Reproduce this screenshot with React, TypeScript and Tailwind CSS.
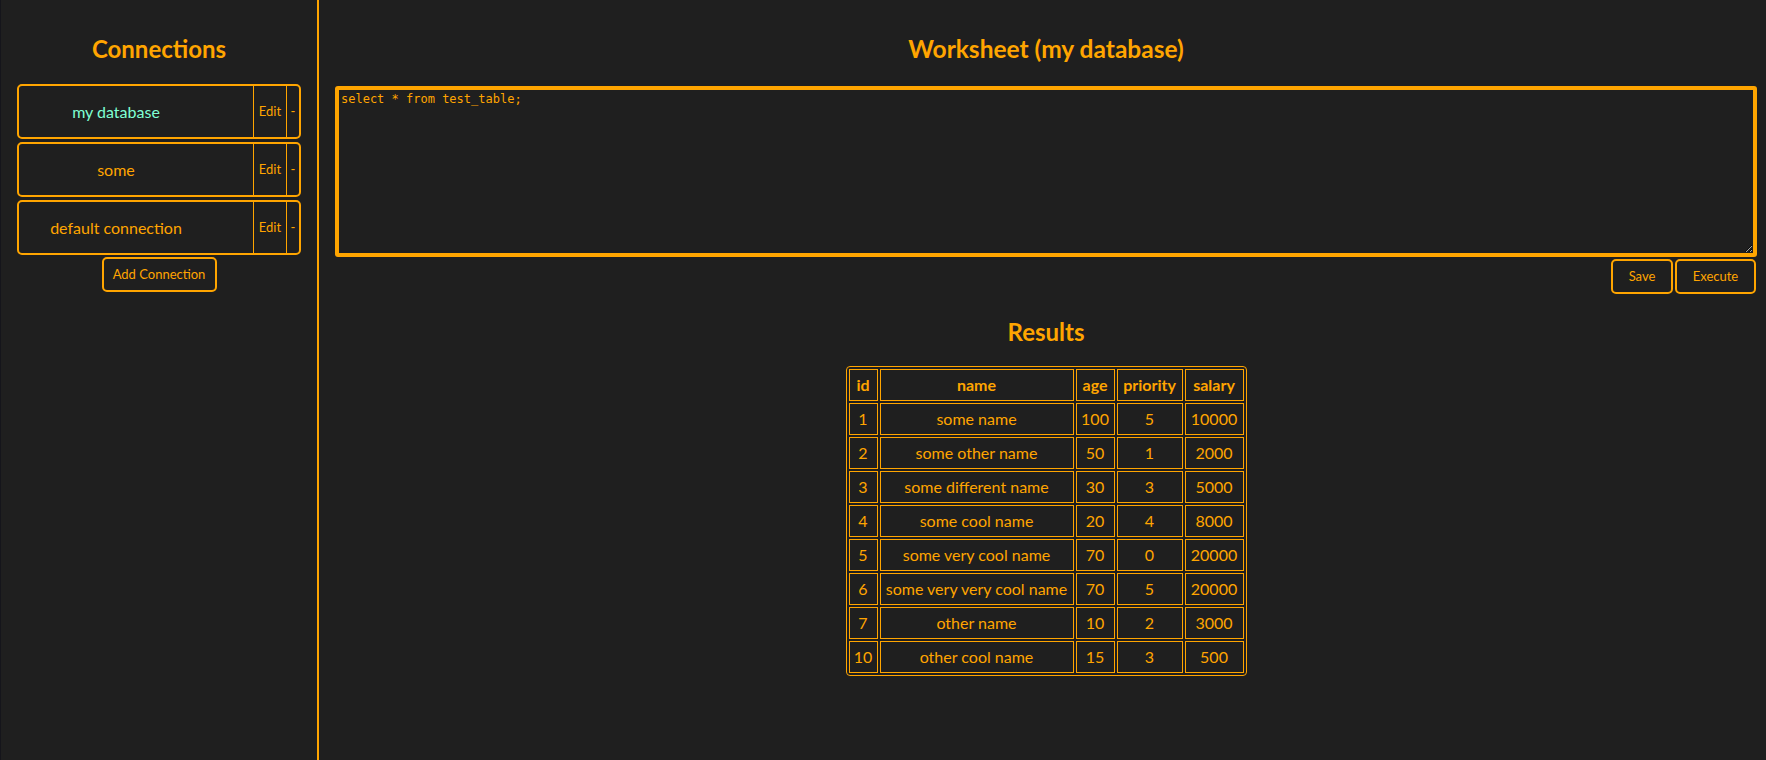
import { useState } from 'react';

type Connection = { id: number; name: string };

const connections: Connection[] = [
  { id: 1, name: 'my database' },
  { id: 2, name: 'some' },
  { id: 3, name: 'default connection' },
];

const columns = ['id', 'name', 'age', 'priority', 'salary'];
const colWidths = ['w-[29px]', 'w-[194px]', 'w-[39px]', 'w-[66px]', 'w-[59px]'];

const rows = [
  [1, 'some name', 100, 5, 10000],
  [2, 'some other name', 50, 1, 2000],
  [3, 'some different name', 30, 3, 5000],
  [4, 'some cool name', 20, 4, 8000],
  [5, 'some very cool name', 70, 0, 20000],
  [6, 'some very very cool name', 70, 5, 20000],
  [7, 'other name', 10, 2, 3000],
  [10, 'other cool name', 15, 3, 500],
];

export default function App() {
  const [selected, setSelected] = useState(1);
  const [query, setQuery] = useState('select * from test_table;');

  return (
    <div className="flex h-screen w-full bg-[#1f1f1f] text-[#ffa500] font-['Lato',sans-serif]">
      <aside className="w-[319px] shrink-0 border-l border-l-[#15151b] border-r-2 border-r-[#ffa500] pt-[35px]">
        <h2 className="text-center text-[24px] leading-[28px] font-bold">Connections</h2>
        <div className="mt-[21px] ml-[16px] flex w-[284px] flex-col gap-[3px]">
          {connections.map((c) => (
            <div key={c.id} className="flex h-[55px] rounded-[5px] border-2 border-[#ffa500]">
              <button
                onClick={() => setSelected(c.id)}
                className={`w-[194px] text-center text-[16px] ${selected === c.id ? 'text-[#7fffd4]' : 'text-[#ffa500]'}`}
              >
                {c.name}
              </button>
              <div className="flex-1" />
              <button className="w-[33px] border-l border-[#ffa500] text-[13px]">Edit</button>
              <button className="w-[13px] border-l border-[#ffa500] text-[13px]">-</button>
            </div>
          ))}
        </div>
        <div className="mt-[2px] flex justify-center">
          <button className="h-[35px] w-[115px] rounded-[5px] border-2 border-[#ffa500] text-[13px]">
            Add Connection
          </button>
        </div>
      </aside>

      <main className="flex-1 pl-[16px] pr-[9px] pt-[35px]">
        <h2 className="text-center text-[24.5px] leading-[28px] font-bold">Worksheet (my database)</h2>
        <textarea
          value={query}
          onChange={(e) => setQuery(e.target.value)}
          spellCheck={false}
          className="mt-[23px] block h-[171px] w-full rounded-[3px] border-4 border-[#ffa500] bg-transparent p-[2px] font-['DejaVu_Sans_Mono',monospace] text-[12px] leading-[15px] text-[#ffa500] outline-none"
        />
        <div className="mt-[2px] flex justify-end gap-[2px] pr-[1px]">
          <button className="h-[35px] w-[62px] rounded-[5px] border-2 border-[#ffa500] text-[13px]">Save</button>
          <button className="h-[35px] w-[81px] rounded-[5px] border-2 border-[#ffa500] text-[13px]">Execute</button>
        </div>

        <h2 className="mt-[24px] text-center text-[24px] leading-[28px] font-bold">Results</h2>
        <table className="mx-auto mt-[20px] border-separate border-spacing-[2px] rounded-[4px] border border-[#ffa500] text-[16px]">
          <thead>
            <tr>
              {columns.map((col, i) => (
                <th
                  key={col}
                  className={`${colWidths[i]} border border-[#ffa500] px-[1px] py-[6px] leading-[18px] font-bold whitespace-nowrap`}
                >
                  {col}
                </th>
              ))}
            </tr>
          </thead>
          <tbody>
            {rows.map((row) => (
              <tr key={row[0]}>
                {row.map((cell, i) => (
                  <td
                    key={i}
                    className={`${colWidths[i]} border border-[#ffa500] px-[1px] py-[6px] text-center leading-[18px] whitespace-nowrap`}
                  >
                    {cell}
                  </td>
                ))}
              </tr>
            ))}
          </tbody>
        </table>
      </main>
    </div>
  );
}
